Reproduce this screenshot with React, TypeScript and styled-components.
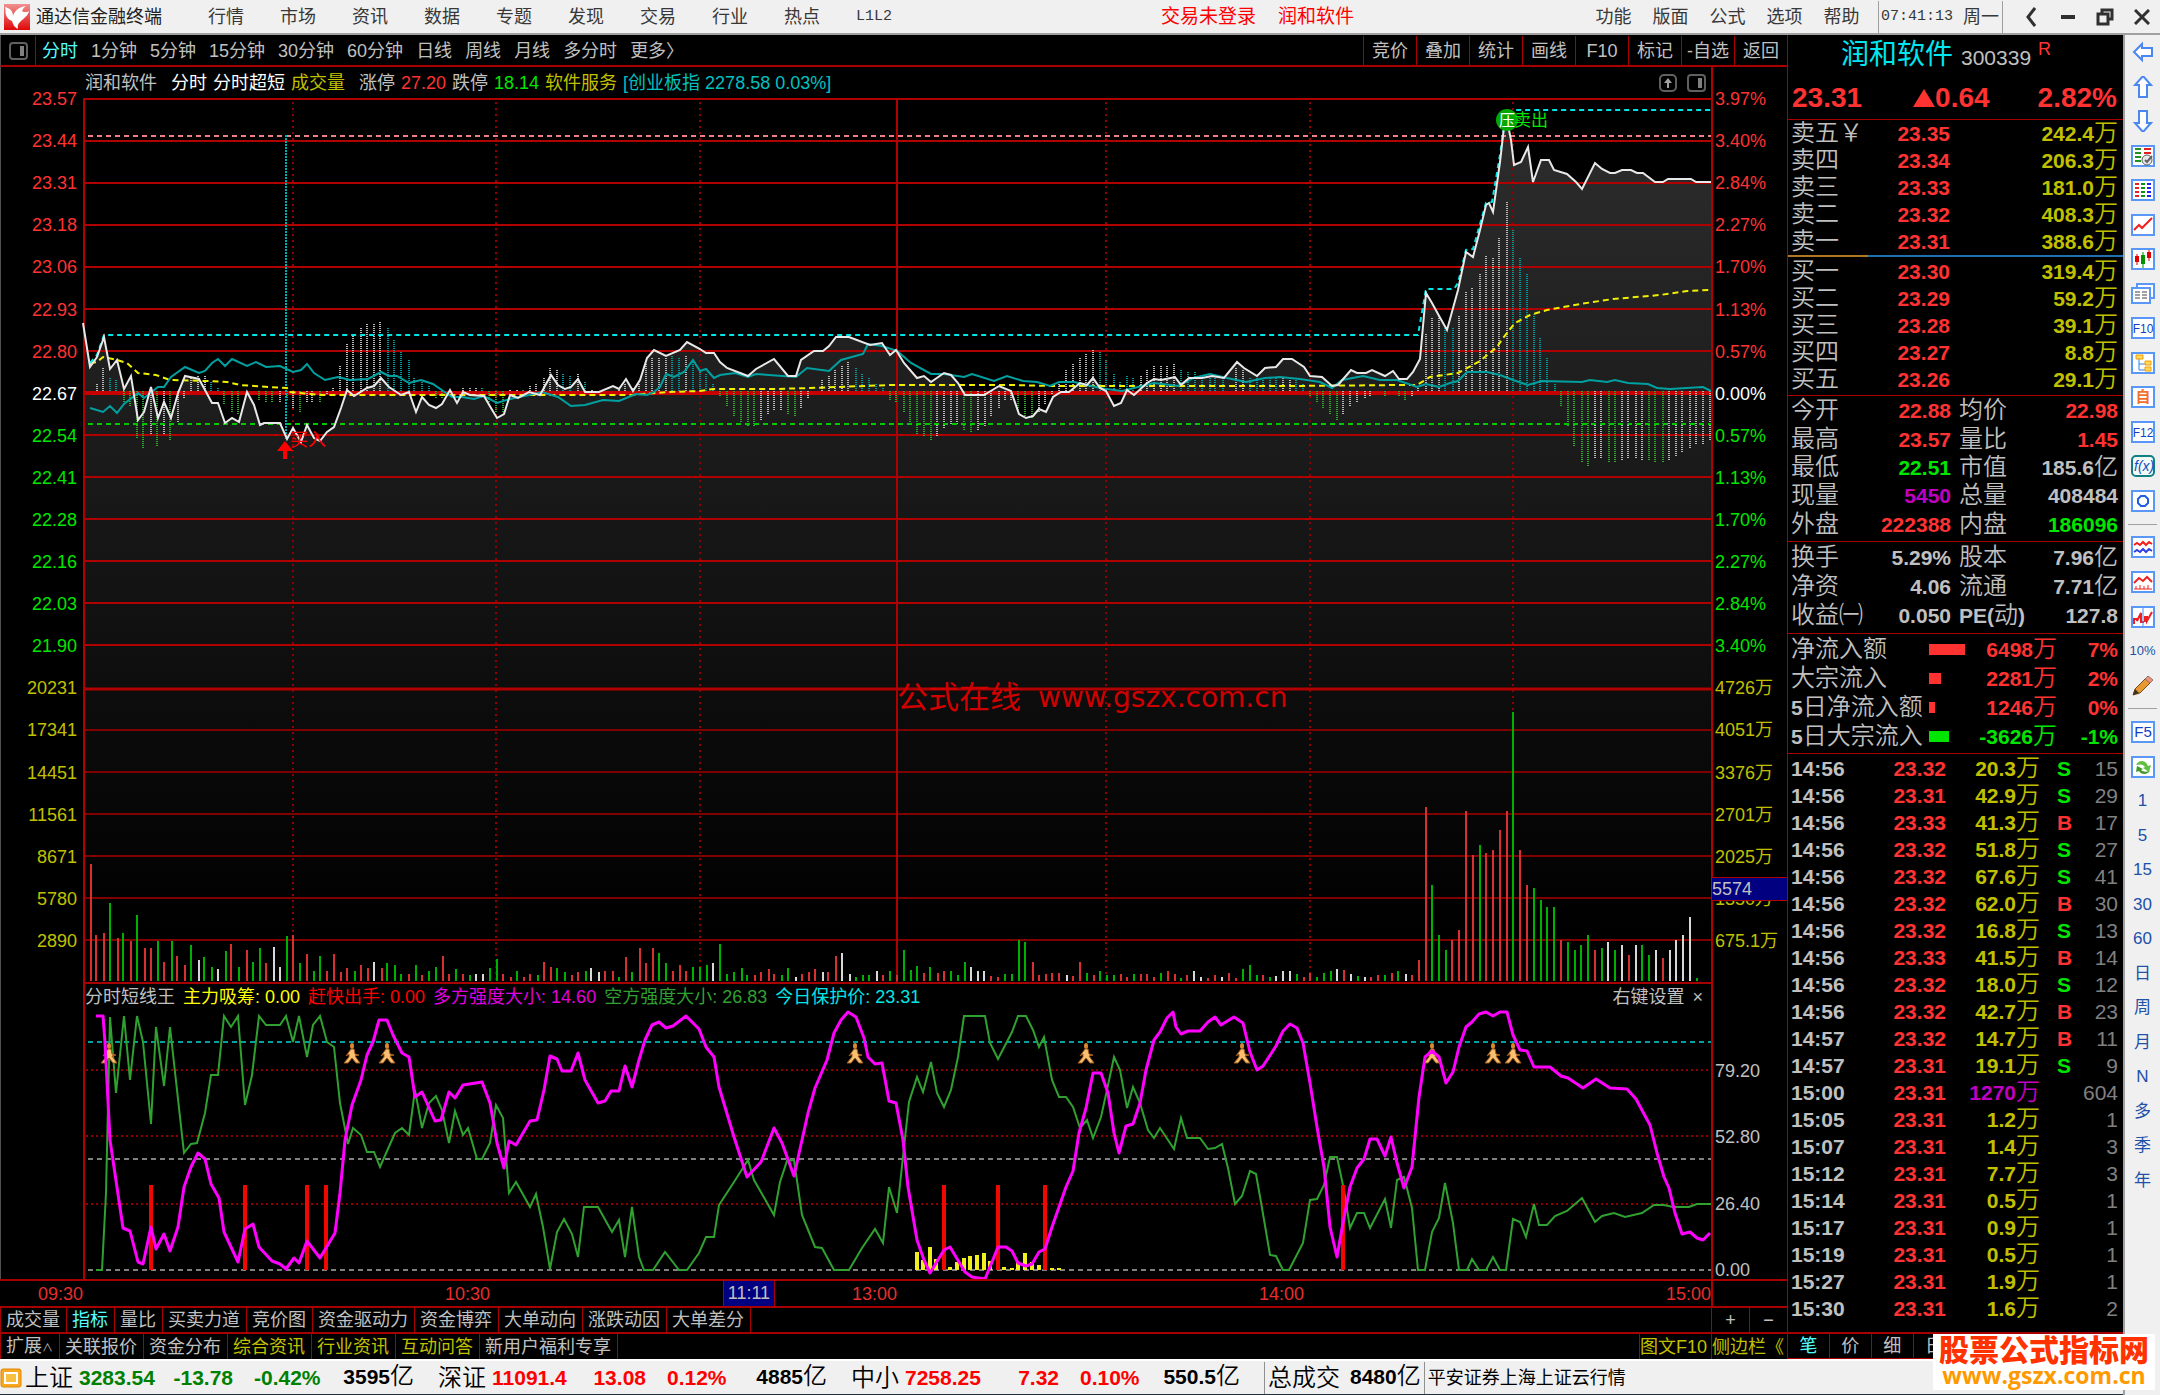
import React from "react";
import styled, { createGlobalStyle, css } from "styled-components";

const C = {
  bg: "#000000",
  chrome: "#f0f0f0",
  line: "#a80000",
  grid: "#b00000",
  gridDim: "#800000",
  gray: "#c0c0c0",
  dim: "#808080",
  red: "#ff3232",
  green: "#00e600",
  yellow: "#c0c000",
  cyan: "#54ffff",
  teal: "#00c0c0",
  magenta: "#c000c0",
  white: "#ffffff",
};

const SANS = `"Liberation Sans", "Noto Sans CJK SC", sans-serif`;
const MONO = `"Liberation Mono", "Noto Sans CJK SC", monospace`;

const GlobalStyle = createGlobalStyle`
  *, *::before, *::after { box-sizing: border-box; }
  body { margin: 0; background: ${C.bg}; font-family: ${SANS}; font-size: 18px; line-height: 24px; }
  button { margin: 0; padding: 0; border: 0; background: none; color: inherit; font: inherit; cursor: pointer; white-space: nowrap; }
  table { border-collapse: collapse; }
`;

/* ---------- page frame ---------- */

const Page = styled.div`
  position: relative;
  display: flex;
  flex-direction: column;
  height: 100vh;
  overflow: hidden;
  background: ${C.bg};
  color: ${C.gray};
  white-space: nowrap;
`;

const Body = styled.div`
  display: flex;
  flex: 1;
  min-height: 0;
`;

const Desk = styled.div`
  display: flex;
  flex: 1;
  flex-direction: column;
  min-width: 0;
`;

const Panes = styled.div`
  display: flex;
  flex: 1;
  min-height: 0;
`;

const Workspace = styled.main`
  display: flex;
  flex: 1;
  flex-direction: column;
  min-width: 0;
`;

/* ---------- menu bar ---------- */

const MenuBar = styled.header`
  display: flex;
  flex: none;
  align-items: center;
  height: 35px;
  padding: 0 0 0 4px;
  border-bottom: 2px solid #a0a0a0;
  background: ${C.chrome};
  color: #383838;
`;

const AppName = styled.span`
  width: 160px;
  padding-left: 6px;
  color: #202020;
`;

const MenuButton = styled.button<{ $w: number; $mono?: boolean }>`
  width: ${(p) => p.$w}px;
  text-align: center;
  ${(p) => p.$mono && css`font-family: ${MONO}; font-size: 15px;`}
`;

const Alerts = styled.div`
  display: flex;
  gap: 22px;
  margin-left: 251px;
  color: #ff0000;
  font-size: 19px;
`;

const Spring = styled.div`
  flex: 1;
`;

const Clock = styled.div`
  display: flex;
  align-items: center;
  gap: 10px;
  width: 125px;
  height: 32px;
  margin: 0 9px 0 8px;
  padding-left: 2px;
  border: solid #a0a0a0;
  border-width: 0 1px;
`;

const ClockTime = styled.span`
  font-family: ${MONO};
  font-size: 15px;
`;

const WindowButton = styled.button`
  display: flex;
  align-items: center;
  justify-content: center;
  width: 37px;
  height: 32px;
`;

/* ---------- period toolbar ---------- */

const Toolbar = styled.nav`
  display: flex;
  flex: none;
  height: 32px;
  padding-top: 1px;
  border-bottom: 2px solid ${C.line};
  border-left: 1px solid #505050;
`;

const PaneToggle = styled.button`
  display: flex;
  align-items: center;
  justify-content: center;
  width: 35px;
  border-right: 1px solid ${C.line};
`;

const Periods = styled.div`
  display: flex;
  flex: 1;
  gap: 13px;
  align-items: center;
  padding-left: 6px;
`;

const TextButton = styled.button<{ $color?: string }>`
  color: ${(p) => p.$color ?? "inherit"};
`;

const ToolButton = styled.button`
  width: 53px;
  border-left: 1px solid ${C.line};
`;

/* ---------- chart grid ---------- */

const ChartGrid = styled.section`
  display: grid;
  flex: 1;
  grid-template-columns: 83px minmax(0, 1fr) 76px;
  grid-template-rows: 31px minmax(0, 884fr) minmax(0, 297fr) 27px;
  min-height: 0;
`;

const Axis = styled.div<{ $side: "left" | "right" }>`
  position: relative;
  display: flex;
  flex-direction: column;
  grid-row: 1 / 3;
  grid-column: ${(p) => (p.$side === "left" ? 1 : 3)};
  padding: 11px 0 20px;
  ${(p) =>
    p.$side === "left"
      ? css`
          padding-right: 6px;
          border-left: 1px solid #505050;
          text-align: right;
        `
      : css`
          padding-left: 2px;
          border-left: 2px solid ${C.grid};
        `}
`;

const Tick = styled.div<{ $color: string }>`
  display: flex;
  flex: 1;
  align-items: center;
  justify-content: inherit;
  color: ${(p) => p.$color};
`;

const LeftTick = styled(Tick)`
  justify-content: flex-end;
`;

const CursorValue = styled.div`
  position: absolute;
  top: 88.5%;
  right: 0;
  left: -1px;
  height: 24px;
  border: 1px solid ${C.grid};
  border-width: 1px 0;
  background: #000080;
  color: ${C.gray};
  line-height: 22px;
`;

const InfoBar = styled.div`
  display: flex;
  gap: 6px;
  align-items: center;
  padding: 0 5px 0 2px;
`;

const Ink = styled.span<{ $color: string; $wide?: boolean }>`
  margin-right: ${(p) => (p.$wide ? 8 : 0)}px;
  color: ${(p) => p.$color};
`;

const IconButton = styled.button`
  display: flex;
  margin-left: 4px;
`;

const Plot = styled.div`
  grid-column: 2;
  min-height: 0;
`;

const SubPlot = styled.div`
  display: flex;
  grid-column: 2;
  flex-direction: column;
  min-height: 0;
  border-top: 2px solid ${C.line};
`;

const SubHeader = styled.div`
  display: flex;
  flex: none;
  gap: 8px;
  align-items: center;
  height: 26px;
  padding: 0 8px 0 2px;
`;

const Canvas = styled.svg`
  display: block;
  flex: 1;
  width: 100%;
  height: 100%;
  min-height: 0;
  overflow: visible;
  font-family: ${SANS};
`;

const SubLeft = styled.div`
  grid-column: 1;
  border-left: 1px solid #505050;
`;

const SubAxis = styled.div`
  display: flex;
  grid-column: 3;
  flex-direction: column;
  justify-content: space-between;
  padding: 80px 0 0 2px;
  border-left: 2px solid ${C.grid};
  line-height: 18px;
`;

const TimeAxis = styled.div`
  position: relative;
  display: flex;
  grid-row: 4;
  grid-column: 1 / 3;
  align-items: center;
  border-top: 2px solid ${C.line};
  color: #e62e2e;
  text-align: right;
`;

const TimeStart = styled.span`
  width: 83px;
`;

const TimeMark = styled.span`
  flex: 1;
`;

const CursorTime = styled.span`
  position: absolute;
  top: 0;
  left: 42.25%;
  width: 52px;
  height: 25px;
  border: 1px solid ${C.line};
  border-width: 0 1px;
  background: #000080;
  color: ${C.gray};
  line-height: 24px;
  text-align: center;
`;

const TimeCorner = styled.div`
  grid-row: 4;
  grid-column: 3;
  border-top: 2px solid ${C.line};
  border-left: 2px solid ${C.grid};
`;

/* ---------- bottom tabs ---------- */

const TabRow = styled.nav<{ $h: number }>`
  display: flex;
  flex: none;
  height: ${(p) => p.$h}px;
  border-top: 2px solid ${C.line};
  border-left: 1px solid ${C.line};
`;

const Tab = styled.button<{ $color?: string }>`
  padding: 0 6px 0 5px;
  border-right: 1px solid ${C.line};
  color: ${(p) => p.$color ?? "inherit"};
`;

const Caret = styled.small`
  font-size: 11px;
`;

const EdgeTab = styled.button<{ $w: number; $color?: string }>`
  width: ${(p) => p.$w}px;
  border-left: 1px solid ${C.line};
  color: ${(p) => p.$color ?? "inherit"};
  text-align: ${(p) => (p.$color ? "left" : "center")};
`;

/* ---------- quote panel ---------- */

const Quote = styled.aside`
  display: flex;
  flex: none;
  flex-direction: column;
  width: 336px;
  border-left: 1px solid ${C.line};
  font-size: 21px;
`;

const Title = styled.div`
  display: flex;
  flex: none;
  align-items: center;
  height: 40px;
  padding-left: 53px;
`;

const StockName = styled.h1`
  margin: 0 8px 0 0;
  color: #00e6f0;
  font-size: 28px;
  font-weight: 400;
`;

const StockCode = styled.span`
  padding-top: 5px;
`;

const Flag = styled.span`
  align-self: flex-start;
  margin-left: 7px;
  padding-top: 2px;
  color: ${C.red};
  font-size: 18px;
`;

const Price = styled.div`
  display: flex;
  flex: none;
  align-items: center;
  justify-content: space-between;
  height: 45px;
  padding: 2px 6px 0 4px;
  border-bottom: 1px solid ${C.line};
  color: ${C.red};
  font-size: 28px;
  font-weight: 700;
`;

const Up = styled.span`
  display: flex;
  align-items: center;
  margin-left: 3px;
`;

const Triangle = styled.i`
  border: solid transparent;
  border-width: 0 11px 18px;
  border-bottom-color: ${C.red};
`;

const DataTable = styled.table`
  width: 100%;
  table-layout: fixed;

  td,
  th {
    height: 27px;
    padding: 0;
    font-weight: 400;
    line-height: 24px;
    text-align: right;
  }
  th {
    text-align: left;
  }
`;

const BookSection = styled.div<{ $last?: boolean }>`
  flex: none;
  height: ${(p) => (p.$last ? 139 : 137)}px;
  padding: ${(p) => (p.$last ? 1 : 0)}px 5px 0 3px;
  ${(p) =>
    p.$last
      ? css`border-bottom: 1px solid ${C.line};`
      : css`
          border-bottom: 2px solid;
          border-image: linear-gradient(90deg, #b07820 24%, #2070b0 24%) 1;
        `}
`;

const StatSection = styled.div<{ $h: number }>`
  display: flex;
  flex: none;
  flex-direction: column;
  height: ${(p) => p.$h}px;
  padding: 1px 5px 2px 3px;
  border-bottom: 1px solid ${C.line};
`;

const StatRow = styled.div`
  display: grid;
  flex: 0 1 29px;
  grid-template-columns: auto 1fr 62px 89px;
  column-gap: 8px;
  align-items: center;
  min-height: 0;
`;

const FlowRow = styled.div`
  display: grid;
  flex: 0 1 29px;
  grid-template-columns: 138px 38px 1fr 61px;
  align-items: center;
  min-height: 0;
`;

const FlowBar = styled.i<{ $color: string }>`
  height: 11px;
  background: ${(p) => p.$color};
`;

const Right = styled.span`
  text-align: right;
`;

const Tape = styled.div`
  flex: 1;
  min-height: 0;
  padding: 1px 5px 0 3px;
  overflow: hidden;
`;

const Side = styled.td<{ $buy: boolean }>`
  && {
    padding-left: 17px;
    color: ${(p) => (p.$buy ? C.red : C.green)};
    font-weight: 700;
    text-align: left;
  }
`;

const Lots = styled.td`
  color: ${C.dim};
`;

const PanelTabs = styled.nav`
  display: grid;
  flex: none;
  grid-template-columns: repeat(8, 1fr);
  height: 27px;
  border: solid ${C.line};
  border-width: 2px 0 1px;
  font-size: 18px;
`;

const PanelTab = styled.button<{ $on?: boolean }>`
  border-right: 1px solid ${C.line};
  color: ${(p) => (p.$on ? C.cyan : "inherit")};
`;

const Latin = styled.span<{ $color?: string }>`
  color: ${(p) => p.$color ?? "inherit"};
  font-size: 21px;
  font-weight: 700;
  line-height: 20px;
`;

const Han = styled.span<{ $color?: string }>`
  color: ${(p) => p.$color ?? "inherit"};
  font-size: 24px;
  font-weight: 350;
  line-height: 20px;
`;

/* ---------- side tools ---------- */

const SideTools = styled.nav`
  flex: none;
  width: 37px;
  border-left: 2px solid #a0a0a0;
  background: ${C.chrome};
`;

const ToolStack = styled.div`
  display: flex;
  flex-direction: column;
  height: 1163px;
`;

const SideButton = styled.button<{ $small?: boolean }>`
  display: flex;
  flex: 1;
  align-items: center;
  justify-content: center;
  color: #2050a8;
  font-size: ${(p) => (p.$small ? 13 : 17)}px;
`;

const SideRule = styled.hr`
  width: 29px;
  height: 12px;
  margin: 0 auto;
  border: 0;
  background: linear-gradient(#a0a0a0, #a0a0a0) center / 100% 1px no-repeat;
`;

/* ---------- status bar ---------- */

const Status = styled.footer`
  display: flex;
  flex: none;
  align-items: center;
  height: 36px;
  border-top: 2px solid #ffffff;
  border-bottom: 1px solid #20303c;
  background: ${C.chrome};
  color: #000000;
`;

const IndexGroup = styled.div<{ $color: string }>`
  display: grid;
  grid-template-columns: 54px 94px 60px 89px 92px 24px;
  align-items: center;
  color: ${(p) => p.$color};

  & > :nth-child(3),
  & > :nth-child(5) {
    text-align: right;
  }
  & > :nth-child(4) {
    padding-left: 21px;
  }
`;

const StatusCell = styled.div`
  display: flex;
  gap: 10px;
  align-items: center;
  height: 32px;
  padding: 0 3px;
  border-left: 1px solid #909090;
`;

const Stamp = styled.div`
  position: absolute;
  right: 5px;
  bottom: 5px;
  display: flex;
  flex-direction: column;
  align-items: center;
  width: 222px;
  height: 56px;
  background: #ffffff;
  color: #ff9900;
  font-family: "Open Sans", sans-serif;
  font-size: 23px;
  font-weight: 700;
  line-height: 26px;
`;

const StampTitle = styled.strong`
  color: #ff3200;
  font-family: "Noto Sans CJK SC", sans-serif;
  font-size: 30px;
  font-weight: 900;
  line-height: 28px;
`;

/* ---------- helpers ---------- */

function Mixed({ children, color }: { children: string; color?: string }) {
  return (
    <>
      {children
        .split(/([\x21-\x7e]+)/)
        .filter(Boolean)
        .map((part, i) =>
          /^[\x21-\x7e]/.test(part) ? (
            <Latin key={i} $color={color}>{part}</Latin>
          ) : (
            <Han key={i} $color={color}>{part}</Han>
          )
        )}
    </>
  );
}

const pairs = (s: string) => s.trim().split(/\s+/).map((p) => p.split(",").map(Number));
const bars = (s: string, base: number) => pairs(s).map(([x, y]) => `M${x} ${base}V${y}`).join("");

/* ---------- chart data ---------- */

const PRICE = `83,323 90,367 97,357 104,337 110,369 117,360 124,389 131,376 138,420 144,412 151,387 158,418 164,402 171,418 178,393 185,376 199,379 205,390 212,403 218,403 225,423 232,418 239,422 247,392 254,405 260,425 264,423 280,423 287,439 293,428 301,442 307,425 314,438 320,441 327,432 334,427 341,408 347,390 354,396 367,388 374,386 381,378 389,387 401,395 409,392 416,412 422,397 429,405 436,408 442,404 450,390 457,403 463,392 470,395 484,396 491,408 497,418 504,414 510,395 518,398 529,392 540,395 551,375 558,385 565,389 571,387 578,379 585,392 599,392 613,386 619,389 626,379 633,391 640,380 647,358 654,350 666,356 680,350 687,342 700,349 706,353 714,353 720,362 727,368 748,376 756,369 774,359 788,376 796,376 801,360 814,351 823,351 829,346 836,337 849,337 870,345 882,343 890,355 896,350 904,363 917,378 924,376 931,382 944,373 951,375 958,383 965,395 984,395 999,386 1011,391 1019,414 1026,418 1033,416 1039,409 1046,412 1053,397 1061,392 1069,392 1080,383 1087,385 1093,378 1100,388 1106,391 1114,406 1121,403 1127,390 1134,395 1147,383 1154,379 1161,380 1175,377 1181,385 1189,378 1202,378 1212,376 1224,378 1237,362 1244,368 1257,376 1265,368 1276,367 1283,359 1292,359 1304,367 1310,376 1322,377 1332,386 1338,385 1351,370 1357,373 1366,373 1372,370 1385,376 1393,371 1399,379 1407,379 1413,372 1420,359 1426,293 1432,303 1438,314 1447,330 1458,290 1466,252 1473,257 1480,230 1486,205 1489,203 1493,212 1500,162 1504,127 1508,125 1511,140 1514,165 1521,162 1528,147 1533,182 1541,160 1549,160 1554,170 1567,174 1576,182 1582,189 1595,163 1602,169 1610,173 1615,173 1622,170 1631,170 1637,173 1643,173 1655,182 1663,182 1668,179 1691,179 1696,182 1711,182`;

const INDEX_LINE = `90,408 103,412 110,406 117,413 124,404 138,393 144,398 158,387 164,387 171,377 185,367 199,373 205,371 212,363 218,359 225,366 232,359 247,366 256,362 266,367 280,366 293,372 301,370 307,364 314,373 325,380 338,377 350,380 368,379 381,372 389,376 397,376 409,383 421,380 433,384 446,393 452,397 462,397 474,399 484,396 497,403 510,399 529,395 542,392 558,397 571,406 585,405 603,400 619,401 636,394 647,395 654,392 660,387 666,374 674,377 684,372 693,360 700,371 706,369 714,378 720,375 735,373 748,377 756,374 796,377 807,368 829,371 841,360 863,354 868,344 882,346 897,351 911,363 931,374 944,374 964,377 972,374 994,381 1007,376 1023,381 1037,382 1050,386 1059,382 1074,382 1091,386 1106,389 1122,391 1134,388 1154,383 1178,386 1193,378 1210,374 1227,378 1246,382 1265,378 1280,377 1300,379 1320,382 1332,388 1342,380 1363,376 1380,380 1397,380 1417,387 1426,384 1439,387 1450,383 1458,381 1467,372 1487,372 1500,375 1513,380 1528,385 1542,381 1582,382 1590,380 1607,382 1615,380 1628,383 1648,384 1657,388 1670,389 1703,387 1711,391`;

const AVERAGE = `90,363 97,362 103,357 117,360 127,363 138,373 156,375 170,380 207,381 227,382 240,385 268,387 287,388 289,392 321,395 631,395 668,392 700,391 713,389 776,389 810,388 892,385 1011,385 1052,386 1173,386 1294,386 1400,385 1417,385 1430,377 1458,373 1480,361 1497,347 1503,338 1515,323 1530,315 1547,310 1580,304 1613,299 1660,295 1687,291 1711,290`;

const HIGH = `90,363 97,355 104,335 1418,335 1426,289 1454,289 1458,283 1466,250 1473,249 1486,203 1492,202 1500,155 1504,127 1515,110 1711,110`;

const PULSE_WHITE = `97,384 103,367 151,435 164,435 178,423 184,399 191,377 198,376 205,375 280,403 293,408 307,403 312,403 327,395 333,387 340,366 347,343 353,335 361,328 367,323 374,323 380,322 463,388 470,388 476,388 510,389 517,389 530,385 536,384 544,378 550,367 557,369 578,373 592,389 619,389 625,383 633,388 639,383 646,363 652,358 659,357 666,357 686,355 761,421 768,415 774,410 781,411 801,408 808,399 822,380 829,376 835,370 842,365 848,362 937,436 944,429 951,424 957,424 978,431 985,426 991,417 999,408 1005,401 1011,400 1039,413 1045,405 1052,395 1059,382 1066,370 1073,364 1080,357 1086,353 1093,349 1141,375 1147,370 1154,365 1161,366 1167,365 1174,363 1236,368 1243,370 1283,377 1290,377 1343,414 1350,407 1357,402 1365,399 1370,396 1412,397 1418,385 1426,334 1432,317 1439,316 1459,315 1466,291 1472,287 1480,273 1486,255 1493,258 1499,237 1507,202 1595,459 1601,459 1622,461 1628,459 1636,459 1642,460 1669,461 1676,456 1682,452 1690,448 1696,445 1703,444 1710,440`;
const PULSE_TEAL = `110,378 116,380 211,382 218,388 388,328 394,340 401,352 409,360 414,378 422,379 429,385 482,388 523,389 563,373 570,375 585,381 672,355 679,357 693,360 700,372 706,373 713,383 856,367 862,373 869,378 876,383 883,387 1100,352 1106,360 1114,373 1120,382 1127,375 1133,377 1181,370 1188,371 1195,372 1202,376 1210,376 1215,377 1223,378 1250,378 1257,378 1263,378 1270,378 1276,378 1296,380 1303,383 1445,327 1453,327 1513,229 1520,257 1527,273 1534,314 1540,338 1547,358 1555,383`;
const PULSE_GREEN = `124,403 130,407 137,438 143,449 157,446 170,440 224,405 232,412 238,415 259,401 266,403 272,403 287,400 300,413 320,403 436,399 442,399 489,403 496,412 503,412 720,397 727,407 734,417 741,423 748,427 754,426 788,415 795,417 890,401 896,402 904,413 910,423 917,435 924,436 931,441 964,431 971,432 1018,413 1025,417 1032,419 1310,396 1317,402 1323,408 1330,415 1337,420 1385,396 1399,397 1405,401 1561,407 1568,427 1574,446 1582,463 1588,467 1609,462 1615,462 1649,461 1655,463 1663,463`;

const VOL_RED = `91,864 96,935 104,933 118,938 131,941 145,948 151,948 164,962 177,956 185,965 231,944 247,950 266,963 293,935 307,954 327,971 334,954 341,972 347,968 361,965 368,968 382,968 409,974 422,975 443,956 449,974 463,974 503,974 511,977 524,977 530,974 544,962 551,967 572,975 578,972 605,971 613,971 626,957 640,948 646,963 653,948 673,971 680,965 686,971 755,975 761,972 769,969 774,974 802,974 809,972 815,969 828,972 836,956 883,975 897,975 924,973 938,973 944,971 991,976 998,977 1033,962 1039,975 1046,974 1052,973 1059,973 1073,976 1080,962 1094,975 1121,974 1127,977 1141,974 1147,974 1154,977 1168,971 1175,974 1187,975 1208,978 1215,975 1229,973 1236,978 1263,975 1304,977 1310,973 1344,970 1371,977 1378,975 1392,973 1412,975 1419,960 1426,807 1452,940 1459,930 1466,811 1473,855 1486,853 1493,850 1500,830 1507,811 1520,850 1527,885 1561,940 1595,950 1629,955 1663,958`;
const VOL_GREEN = `110,903 123,933 137,915 158,941 172,941 191,945 204,957 212,967 226,951 239,967 253,962 260,948 287,936 300,963 314,971 320,956 355,971 387,963 395,965 401,974 416,965 429,971 436,967 456,969 470,975 490,968 497,959 517,971 538,975 557,968 565,972 586,971 619,977 632,972 659,953 666,963 693,967 700,967 707,965 720,944 727,974 734,972 742,968 747,975 782,975 788,968 856,977 863,975 869,975 890,971 904,950 911,970 917,966 930,967 951,971 958,975 965,962 1005,974 1012,974 1019,940 1025,942 1087,973 1100,971 1107,975 1114,975 1134,974 1161,973 1181,978 1243,969 1250,965 1257,975 1270,977 1297,974 1317,977 1324,973 1331,971 1358,976 1385,975 1398,971 1432,885 1439,935 1446,950 1480,845 1513,712 1534,888 1541,900 1547,907 1554,907 1568,942 1575,950 1581,945 1588,935 1602,948 1615,950 1642,945 1649,955 1697,978`;
const VOL_WHITE = `199,960 218,969 274,947 280,967 374,962 476,974 483,974 591,968 599,972 713,963 796,977 823,972 842,953 850,974 877,971 971,967 978,971 984,971 1067,975 1194,971 1201,977 1222,977 1276,976 1283,971 1290,971 1337,969 1351,974 1365,977 1406,974 1608,942 1622,945 1636,945 1656,950 1670,950 1676,940 1683,935 1690,917`;

const LONG_LINE = `96,1016 103,1016 105,1043 110,1140 123,1228 130,1231 138,1262 143,1264 151,1227 156,1249 164,1234 170,1251 178,1227 184,1187 191,1167 198,1153 205,1159 211,1184 219,1198 224,1232 238,1262 245,1229 253,1224 259,1247 272,1261 280,1264 286,1269 294,1258 299,1263 307,1241 320,1258 335,1233 340,1193 345,1140 352,1105 361,1080 367,1055 373,1042 379,1020 387,1020 393,1035 402,1053 409,1057 415,1097 422,1092 435,1121 441,1120 449,1092 455,1098 463,1085 482,1082 490,1103 497,1143 504,1168 509,1141 516,1145 530,1121 537,1120 544,1090 550,1056 557,1059 562,1071 571,1071 578,1053 585,1080 598,1103 605,1101 611,1091 619,1091 625,1066 632,1087 639,1060 645,1040 652,1025 659,1022 666,1028 673,1026 686,1016 699,1029 706,1047 714,1057 719,1087 734,1137 747,1177 761,1162 774,1128 782,1143 794,1176 802,1140 808,1113 815,1088 827,1060 834,1033 841,1020 848,1012 856,1017 864,1038 868,1057 875,1064 882,1063 889,1101 896,1103 903,1140 908,1187 917,1240 924,1260 930,1273 944,1250 950,1247 965,1272 972,1277 985,1279 992,1262 998,1247 1006,1247 1012,1251 1018,1263 1026,1266 1032,1264 1039,1252 1045,1249 1052,1227 1059,1207 1066,1187 1073,1171 1079,1133 1086,1108 1093,1073 1101,1073 1108,1093 1114,1133 1119,1153 1126,1126 1133,1124 1140,1103 1146,1070 1154,1040 1160,1032 1167,1018 1173,1012 1176,1027 1181,1034 1188,1031 1200,1031 1208,1022 1215,1017 1221,1025 1234,1017 1243,1023 1250,1052 1257,1070 1263,1066 1276,1046 1283,1031 1290,1024 1297,1028 1303,1043 1310,1083 1317,1127 1324,1167 1330,1227 1337,1257 1343,1223 1350,1187 1357,1168 1364,1159 1370,1139 1377,1139 1385,1156 1391,1137 1397,1163 1404,1188 1412,1167 1419,1097 1425,1057 1432,1051 1439,1057 1446,1083 1453,1072 1459,1047 1466,1027 1472,1022 1479,1014 1486,1012 1493,1016 1500,1012 1507,1012 1513,1035 1520,1050 1527,1051 1534,1067 1550,1067 1561,1076 1568,1078 1583,1088 1596,1079 1610,1088 1627,1089 1636,1099 1650,1125 1657,1153 1664,1177 1669,1188 1675,1213 1682,1234 1690,1232 1697,1238 1703,1240 1710,1233`;

const SHORT_LINE = `96,1270 102,1270 106,1193 110,1017 116,1093 124,1016 130,1080 137,1016 143,1042 151,1124 156,1027 164,1086 170,1027 184,1153 191,1144 197,1143 205,1113 211,1075 218,1075 224,1016 231,1027 238,1016 245,1105 252,1075 259,1016 266,1025 280,1025 286,1016 293,1042 299,1016 307,1057 313,1025 320,1016 327,1042 334,1047 340,1103 348,1144 353,1128 361,1135 367,1152 374,1152 380,1167 395,1133 402,1128 409,1135 415,1090 422,1128 429,1103 436,1096 442,1110 449,1143 455,1111 463,1135 468,1128 477,1159 482,1159 490,1143 496,1105 503,1118 509,1193 516,1182 530,1207 536,1194 543,1227 550,1269 557,1232 564,1219 572,1234 578,1257 584,1207 598,1207 612,1232 619,1220 625,1257 632,1207 639,1257 644,1270 653,1270 665,1252 679,1270 687,1270 699,1253 706,1237 714,1237 719,1205 734,1182 748,1160 754,1180 774,1215 780,1182 787,1161 794,1160 802,1215 815,1247 822,1248 834,1270 849,1270 862,1248 875,1229 883,1243 889,1187 897,1213 904,1147 909,1102 917,1077 923,1092 931,1062 937,1093 944,1107 951,1090 958,1057 964,1016 985,1016 990,1043 998,1059 1012,1032 1018,1016 1026,1016 1033,1030 1039,1047 1044,1037 1052,1080 1059,1097 1066,1097 1073,1107 1080,1128 1087,1120 1093,1138 1101,1117 1107,1090 1114,1057 1120,1070 1127,1108 1133,1087 1140,1103 1148,1130 1154,1138 1160,1128 1174,1149 1181,1118 1187,1138 1200,1138 1208,1149 1215,1148 1222,1144 1228,1168 1235,1204 1242,1196 1250,1171 1256,1174 1262,1208 1270,1255 1276,1256 1283,1270 1289,1270 1303,1243 1310,1200 1317,1199 1324,1185 1330,1157 1337,1157 1344,1190 1350,1228 1357,1213 1364,1213 1370,1228 1385,1199 1391,1228 1397,1180 1404,1177 1412,1208 1418,1270 1425,1270 1432,1232 1439,1218 1445,1183 1453,1223 1459,1270 1467,1270 1472,1259 1479,1270 1486,1270 1493,1257 1500,1270 1506,1270 1513,1219 1520,1222 1526,1237 1534,1204 1539,1225 1547,1225 1555,1216 1567,1211 1582,1198 1595,1222 1602,1216 1614,1213 1625,1217 1642,1213 1654,1205 1664,1205 1673,1207 1689,1207 1697,1204 1711,1204`;

const INFLOW = `917,1252 923,1260 930,1247 936,1259 950,1267 957,1262 964,1258 970,1256 977,1255 984,1253 990,1261 1004,1267 1012,1268 1018,1262 1025,1253 1032,1262 1039,1265 1052,1268 1059,1268`;
const URGENT = [151, 245, 307, 326, 944, 998, 1045, 1343];
const RUNNERS = [109, 352, 387, 855, 1086, 1242, 1432, 1493, 1513];
const PRICE_GRID = Array.from({ length: 14 }, (_, i) => 99 + i * 42);
const VOLUME_GRID = [730, 772, 814, 856, 898, 940];
const HALF_HOURS = [293, 496, 700, 1106, 1310, 1513];

function PriceChart() {
  return (
    <Canvas viewBox="83 98 1628 884" preserveAspectRatio="none" role="img" aria-label="分时走势">
      <defs>
        <linearGradient id="depth" gradientUnits="userSpaceOnUse" x1="0" y1="67" x2="0" y2="930">
          <stop offset="0" stopColor="#303030" />
          <stop offset="1" stopColor="#000000" />
        </linearGradient>
      </defs>
      <polygon points={`${PRICE} 1711,982 83,982`} fill="url(#depth)" />
      <path d={PRICE_GRID.map((y) => `M83 ${y}H1711`).join("")} stroke={C.grid} strokeWidth="2" />
      <path d={VOLUME_GRID.map((y) => `M83 ${y}H1711`).join("")} stroke={C.gridDim} strokeWidth="2" />
      <path d="M83 393H1711" stroke="#c80000" strokeWidth="4" />
      <path d="M83 689H1711" stroke={C.grid} strokeWidth="3" />
      <path d={HALF_HOURS.map((x) => `M${x} 102V980`).join("")} stroke="#900000" strokeWidth="2" strokeDasharray="2 4" />
      <path d="M84 98V982M897 98V982" stroke={C.grid} strokeWidth="2" />
      <path d={bars(PULSE_WHITE, 391)} stroke="#b8b8b8" strokeWidth="2" strokeDasharray="1 1" />
      <path d={bars(PULSE_TEAL, 391)} stroke="#009898" strokeWidth="2" strokeDasharray="1 1" />
      <path d={bars(PULSE_GREEN, 391)} stroke="#30a830" strokeWidth="2" strokeDasharray="1 1" />
      <path d="M88 136H1711" stroke="#f08080" strokeWidth="2" strokeDasharray="5 4" />
      <path d="M88 424H1711" stroke="#00c800" strokeWidth="2" strokeDasharray="5 4" />
      <path d="M286 135V439" stroke="#00b0b0" strokeWidth="2" strokeDasharray="2 1" />
      <polyline points={AVERAGE} fill="none" stroke="#f0f000" strokeWidth="2" strokeDasharray="6 4" />
      <polyline points={HIGH} fill="none" stroke="#00e6e6" strokeWidth="2" strokeDasharray="5 4" />
      <polyline points={INDEX_LINE} fill="none" stroke="#00a0a0" strokeWidth="2" />
      <polyline points={PRICE} fill="none" stroke="#e8e8e8" strokeWidth="2" />
      <path d={bars(VOL_RED, 981)} stroke="#d83030" strokeWidth="2" />
      <path d={bars(VOL_GREEN, 981)} stroke="#00b000" strokeWidth="2" />
      <path d={bars(VOL_WHITE, 981)} stroke="#d8d8d8" strokeWidth="2" />
      <path d="M1712 902V981" stroke="#ffffff" strokeWidth="2" />
      <path d="M285 441l8 10h-6v8h-4v-8h-6z" fill="#ff0000" />
      <text x="290" y="446" fontSize="18" fill="#ff0000">买入</text>
      <circle cx="1507" cy="120" r="11" fill="#00a800" />
      <text x="1514" y="126" fontSize="17" fill="#00e600">卖出</text>
      <text x="1499" y="126" fontSize="16" fill="#ffffff">压</text>
      <text x="897" y="708" fontSize="31" fill="#d00000">公式在线</text>
      <text x="1038" y="707" fontSize="28" fontFamily="DejaVu Sans, sans-serif" fill="#d00000">www.gszx.com.cn</text>
    </Canvas>
  );
}

function StrengthChart() {
  return (
    <Canvas viewBox="83 1010 1628 269" preserveAspectRatio="none" role="img" aria-label="分时短线王">
      <path d="M84 982V1279" stroke={C.grid} strokeWidth="2" />
      <path d="M86 1070H1711M86 1136H1711M86 1204H1711" stroke="#900000" strokeWidth="2" strokeDasharray="2 3" />
      <path d="M88 1042H1711" stroke="#00a0a0" strokeWidth="2" strokeDasharray="5 4" />
      <path d="M88 1159H1711M88 1270H1711" stroke="#808080" strokeWidth="2" strokeDasharray="5 4" />
      <polyline points={SHORT_LINE} fill="none" stroke="#30a030" strokeWidth="2" />
      <path d={bars(INFLOW, 1270)} stroke="#f0f020" strokeWidth="4" />
      <path d={URGENT.map((x) => `M${x} 1270V1185`).join("")} stroke="#f00800" strokeWidth="4" />
      {RUNNERS.map((x) => (
        <g key={x} transform={`translate(${x} 1043)`}>
          <ellipse cx="0" cy="3" rx="2" ry="3" fill="#d88830" />
          <path d="M-1 6L2 6L3 11L7 12L3 13L8 20L4 20L0 15L-4 20L-8 20L-3 14L-3 11L-6 13Z" fill="#f8c070" stroke="#a05818" strokeWidth="1" strokeLinejoin="round" />
        </g>
      ))}
      <polyline points={LONG_LINE} fill="none" stroke="#ff00ff" strokeWidth="3" strokeLinejoin="round" />
    </Canvas>
  );
}

/* ---------- side icons ---------- */

const ICONS: Record<string, React.ReactNode> = {
  左移: <path d="M3 11l8-8v4h10v8H11v4z" fill="#fff" stroke="#4a88f0" strokeWidth="2" />,
  上移: <path d="M12 0l8 9h-4v12H8V9H4z" fill="#fff" stroke="#4a88f0" strokeWidth="2" />,
  下移: <path d="M12 22l8-9h-4V1H8v12H4z" fill="#fff" stroke="#4a88f0" strokeWidth="2" />,
  行情勾选: (
    <>
      <path d="M4 4h6M4 8h6M4 12h6M4 16h6" stroke="#209020" strokeWidth="2" />
      <path d="M13 4h7M13 8h7" stroke="#e02020" strokeWidth="2" />
      <circle cx="16" cy="15" r="5" fill="#e8e8e8" stroke="#606060" />
      <path d="M14 15l2 2 5-6" fill="none" stroke="#606060" strokeWidth="2" />
    </>
  ),
  报价列表: (
    <>
      <path d="M6 4v15" stroke="#f02020" strokeWidth="4" strokeDasharray="2 2" />
      <path d="M12 4v15" stroke="#109010" strokeWidth="4" strokeDasharray="2 2" />
      <path d="M18 4v15" stroke="#2020f0" strokeWidth="4" strokeDasharray="2 2" />
    </>
  ),
  走势图: <path d="M3 16l5-5 3 3 10-10" fill="none" stroke="#f02020" strokeWidth="2" />,
  K线图: (
    <>
      <path d="M6 6v11M18 2v11" stroke="#e00000" strokeWidth="1" />
      <path d="M4 8h4v6H4zM16 4h4v6h-4z" fill="#e00000" />
      <path d="M12 4v16" stroke="#009000" strokeWidth="1" />
      <path d="M10 7h4v9h-4z" fill="#009000" />
    </>
  ),
  资讯: (
    <>
      <path d="M6 1h17v14H6z" fill="#fff" stroke="#5a98f8" strokeWidth="2" />
      <path d="M1 5h18v15H1z" fill="#fff" stroke="#5a98f8" strokeWidth="2" />
      <path d="M4 9h5M11 9h5M4 12h5M11 12h5M4 15h5M11 15h5" stroke="#404040" strokeWidth="1" />
    </>
  ),
  分类: (
    <>
      <path d="M8 6v12h6M8 12h6" fill="none" stroke="#3080e0" strokeWidth="1" />
      <path d="M5 3h7v4H5zM14 9h6v4h-6zM14 15h6v4h-6z" fill="#ffd860" stroke="#f0a000" strokeWidth="1" />
    </>
  ),
  函数: (
    <>
      <rect x="1" y="1" width="22" height="20" rx="4" fill="#f4fafa" stroke="#108080" strokeWidth="2" />
      <text x="3" y="16" fontSize="14" fontStyle="italic" fill="#1050c0">f(x)</text>
    </>
  ),
  圆: <path d="M10 6h4l3 3v4l-3 3h-4l-3-3V9z" fill="none" stroke="#2060e0" strokeWidth="2" />,
  双线: (
    <>
      <path d="M3 9l3-2 3 2 3-3 3 3 3-3 3 2" fill="none" stroke="#f02020" strokeWidth="2" />
      <path d="M3 16l3-2 3 2 3-3 3 3 3-3 3 2" fill="none" stroke="#3040e0" strokeWidth="2" />
    </>
  ),
  成交: (
    <>
      <path d="M3 12l5-5 4 3 4-4 5 5" fill="none" stroke="#f02020" strokeWidth="2" />
      <path d="M3 18h18M5 18v-3M9 18v-4M13 18v-3M17 18v-4" stroke="#f02020" strokeWidth="1" />
    </>
  ),
  波动: (
    <>
      <path d="M3 18v-5h3v2l4-8v9h3M14 16v-5h2v4l5-9" fill="none" stroke="#f02020" strokeWidth="2" />
      <path d="M12 2v18" stroke="#4a88f0" />
    </>
  ),
  画笔: (
    <>
      <path d="M2 20l2-6L16 2l5 4L9 18z" fill="#e89830" stroke="#705020" />
      <path d="M14 4l3-3 5 4-3 3z" fill="#f09080" stroke="#907060" />
      <path d="M2 20l2-6 4 4z" fill="#403020" />
    </>
  ),
  刷新: (
    <>
      <path d="M5 9c3-6 10-5 12 1l3-1-2 7-6-4 2-1c-2-3-5-3-9-2z" fill="#60c040" />
      <path d="M19 15c-3 4-9 4-11 0l-3 1 1-6 6 3-2 1c2 2 5 2 9 1z" fill="#409828" />
    </>
  ),
};

const BARE = new Set(["左移", "上移", "下移", "资讯", "函数", "画笔"]);
const TEXT_ICONS: Record<string, number> = { F10: 12, F12: 12, F5: 15, 自: 15 };

function ToolIcon({ name }: { name: string }) {
  return (
    <svg width="24" height="22" viewBox="0 0 24 22" fontFamily={SANS} aria-hidden="true">
      {!BARE.has(name) && <rect x="1" y="1" width="22" height="20" fill="#fff" stroke="#5a98f8" strokeWidth="2" />}
      {TEXT_ICONS[name] ? (
        <text
          x="12"
          y="16"
          textAnchor="middle"
          fontSize={TEXT_ICONS[name]}
          fontWeight={name === "自" ? 700 : 400}
          fill={name === "自" ? "#f07030" : "#1040c8"}
        >
          {name}
        </text>
      ) : (
        ICONS[name]
      )}
    </svg>
  );
}

const TOOL_GROUPS = [
  ["左移", "上移", "下移", "行情勾选", "报价列表", "走势图", "K线图", "资讯", "F10", "分类", "自", "F12", "函数", "圆"],
  ["双线", "成交", "波动", "10%", "画笔"],
  ["F5", "刷新", "1", "5", "15", "30", "60", "日", "周", "月", "N", "多", "季", "年"],
];

/* ---------- content ---------- */

const MENUS = ["行情", "市场", "资讯", "数据", "专题", "发现", "交易", "行业", "热点"];
const RIGHT_MENUS = ["功能", "版面", "公式", "选项", "帮助"];
const PERIODS = ["分时", "1分钟", "5分钟", "15分钟", "30分钟", "60分钟", "日线", "周线", "月线", "多分时", "更多〉"];
const TOOLS = ["竞价", "叠加", "统计", "画线", "F10", "标记", "-自选", "返回"];

const LEFT_PRICES = "23.57 23.44 23.31 23.18 23.06 22.93 22.80 22.67 22.54 22.41 22.28 22.16 22.03 21.90".split(" ");
const LEFT_VOLUMES = "20231 17341 14451 11561 8671 5780 2890".split(" ");
const PERCENTS = "3.97% 3.40% 2.84% 2.27% 1.70% 1.13% 0.57% 0.00% 0.57% 1.13% 1.70% 2.27% 2.84% 3.40%".split(" ");
const AMOUNTS = "4726万 4051万 3376万 2701万 2025万 1350万 675.1万".split(" ");

const SELLS = [["卖五￥", "23.35", "242.4万"], ["卖四", "23.34", "206.3万"], ["卖三", "23.33", "181.0万"], ["卖二", "23.32", "408.3万"], ["卖一", "23.31", "388.6万"]];
const BUYS = [["买一", "23.30", "319.4万"], ["买二", "23.29", "59.2万"], ["买三", "23.28", "39.1万"], ["买四", "23.27", "8.8万"], ["买五", "23.26", "29.1万"]];

const STATS = [
  ["今开", "22.88", C.red, "均价", "22.98", C.red],
  ["最高", "23.57", C.red, "量比", "1.45", C.red],
  ["最低", "22.51", C.green, "市值", "185.6亿", C.gray],
  ["现量", "5450", C.magenta, "总量", "408484", C.gray],
  ["外盘", "222388", C.red, "内盘", "186096", C.green],
];
const FUNDAMENTALS = [
  ["换手", "5.29%", C.gray, "股本", "7.96亿", C.gray],
  ["净资", "4.06", C.gray, "流通", "7.71亿", C.gray],
  ["收益㈠", "0.050", C.gray, "PE(动)", "127.8", C.gray],
];
const FLOWS: [string, number, string, string, string][] = [
  ["净流入额", 36, "6498万", "7%", C.red],
  ["大宗流入", 12, "2281万", "2%", C.red],
  ["5日净流入额", 6, "1246万", "0%", C.red],
  ["5日大宗流入", 20, "-3626万", "-1%", C.green],
];
const TRADES = `14:56 23.32 20.3万 S 15
14:56 23.31 42.9万 S 29
14:56 23.33 41.3万 B 17
14:56 23.32 51.8万 S 27
14:56 23.32 67.6万 S 41
14:56 23.32 62.0万 B 30
14:56 23.32 16.8万 S 13
14:56 23.33 41.5万 B 14
14:56 23.32 18.0万 S 12
14:56 23.32 42.7万 B 23
14:57 23.32 14.7万 B 11
14:57 23.31 19.1万 S 9
15:00 23.31 1270万 - 604
15:05 23.31 1.2万 - 1
15:07 23.31 1.4万 - 3
15:12 23.31 7.7万 - 3
15:14 23.31 0.5万 - 1
15:17 23.31 0.9万 - 1
15:19 23.31 0.5万 - 1
15:27 23.31 1.9万 - 1
15:30 23.31 1.6万 - 2`.split("\n").map((r) => r.split(" "));

const INDICES: [string, string, string, string, string, string][] = [
  ["上证", "3283.54", "-13.78", "-0.42%", "3595亿", "#008000"],
  ["深证", "11091.4", "13.08", "0.12%", "4885亿", "#ff0000"],
  ["中小", "7258.25", "7.32", "0.10%", "550.5亿", "#ff0000"],
];

const STUDY_TABS = ["成交量", "指标", "量比", "买卖力道", "竞价图", "资金驱动力", "资金博弈", "大单动向", "涨跌动因", "大单差分"];
const LINK_TABS: [string, string?][] = [["关联报价"], ["资金分布"], ["综合资讯", C.yellow], ["行业资讯", C.yellow], ["互动问答", C.yellow], ["新用户福利专享"]];
const PANEL_TABS = ["笔", "价", "细", "日"];

const PaneIcon = () => (
  <svg width="19" height="18" viewBox="0 0 19 18" aria-hidden="true">
    <rect x="1" y="1" width="17" height="16" rx="3" fill="none" stroke="#606060" strokeWidth="2" />
    <rect x="11" y="4" width="4" height="10" fill="#808080" />
  </svg>
);

function Book({ rows, last }: { rows: string[][]; last?: boolean }) {
  return (
    <BookSection $last={last}>
      <DataTable>
        <colgroup><col width="85" /><col width="74" /><col /></colgroup>
        <tbody>
          {rows.map(([label, price, vol]) => (
            <tr key={label}>
              <th scope="row"><Mixed>{label}</Mixed></th>
              <td><Mixed color={C.red}>{price}</Mixed></td>
              <td><Mixed color={C.yellow}>{vol}</Mixed></td>
            </tr>
          ))}
        </tbody>
      </DataTable>
    </BookSection>
  );
}

function Stats({ rows, height }: { rows: string[][]; height: number }) {
  return (
    <StatSection $h={height}>
      {rows.map(([a, av, ac, b, bv, bc]) => (
        <StatRow key={a}>
          <span><Mixed>{a}</Mixed></span>
          <Right><Mixed color={ac}>{av}</Mixed></Right>
          <span><Mixed>{b}</Mixed></span>
          <Right><Mixed color={bc}>{bv}</Mixed></Right>
        </StatRow>
      ))}
    </StatSection>
  );
}

export default function App() {
  return (
    <Page>
      <GlobalStyle />
      <MenuBar>
        <svg width="26" height="26" viewBox="0 0 26 26" aria-hidden="true">
          <defs>
            <linearGradient id="brand" x1="0" y1="0" x2="0" y2="1">
              <stop offset="0" stopColor="#f09090" />
              <stop offset="1" stopColor="#e00808" />
            </linearGradient>
          </defs>
          <rect width="26" height="26" fill="url(#brand)" />
          <path d="M1 3c5 1 8 4 8 9 1-5 6-9 13-10-4 3-5 6-2 6 2 0 4 0 5-1-1 5-5 7-8 10-2 2-4 4-3 8-4-2-5-5-6-8-3-1-5-3-6-6-1-3 0-5-1-8z" fill="#fff" />
        </svg>
        <AppName>通达信金融终端</AppName>
        {MENUS.map((m) => <MenuButton key={m} $w={72}>{m}</MenuButton>)}
        <MenuButton $w={72} $mono>L1L2</MenuButton>
        <Alerts><button>交易未登录</button><button>润和软件</button></Alerts>
        <Spring />
        {RIGHT_MENUS.map((m) => <MenuButton key={m} $w={57}>{m}</MenuButton>)}
        <Clock><ClockTime>07:41:13</ClockTime>周一</Clock>
        <WindowButton aria-label="后退"><svg width="10" height="20" viewBox="0 0 10 20"><path d="M9 1L2 10l7 9" fill="none" stroke="#303030" strokeWidth="3" /></svg></WindowButton>
        <WindowButton aria-label="最小化"><svg width="14" height="4"><rect width="14" height="4" fill="#303030" /></svg></WindowButton>
        <WindowButton aria-label="还原"><svg width="18" height="18" viewBox="0 0 18 18"><path d="M6 6V2h10v9h-4M2 6h10v10H2z" fill="none" stroke="#303030" strokeWidth="3" /></svg></WindowButton>
        <WindowButton aria-label="关闭"><svg width="16" height="16" viewBox="0 0 16 16"><path d="M1 1l14 14M15 1L1 15" stroke="#303030" strokeWidth="3" /></svg></WindowButton>
      </MenuBar>

      <Body>
        <Desk>
          <Panes>
            <Workspace>
              <Toolbar>
                <PaneToggle aria-label="侧栏"><PaneIcon /></PaneToggle>
                <Periods>
                  {PERIODS.map((p, i) => <TextButton key={p} $color={i === 0 ? C.cyan : undefined}>{p}</TextButton>)}
                </Periods>
                {TOOLS.map((t) => <ToolButton key={t}>{t}</ToolButton>)}
              </Toolbar>

              <ChartGrid>
                <Axis $side="left">
                  {LEFT_PRICES.map((v, i) => (
                    <LeftTick key={v} $color={i < 7 ? C.red : i === 7 ? C.white : C.green}>{v}</LeftTick>
                  ))}
                  {LEFT_VOLUMES.map((v) => <LeftTick key={v} $color={C.yellow}>{v}</LeftTick>)}
                </Axis>
                <InfoBar>
                  <Ink $color={C.gray} $wide>润和软件</Ink>
                  <Ink $color={C.white}>分时</Ink>
                  <Ink $color={C.white}>分时超短</Ink>
                  <Ink $color={C.yellow} $wide>成交量</Ink>
                  <Ink $color={C.gray}>涨停</Ink>
                  <Ink $color={C.red}>27.20</Ink>
                  <Ink $color={C.gray}>跌停</Ink>
                  <Ink $color={C.green}>18.14</Ink>
                  <Ink $color={C.yellow}>软件服务</Ink>
                  <Ink $color={C.teal}>[创业板指 2278.58 0.03%]</Ink>
                  <Spring />
                  <IconButton aria-label="放大">
                    <svg width="18" height="18" viewBox="0 0 18 18">
                      <rect x="1" y="1" width="16" height="16" rx="4" fill="none" stroke="#606060" strokeWidth="2" />
                      <path d="M9 4l4 5h-3v5H8V9H5z" fill="#a0a0a0" />
                    </svg>
                  </IconButton>
                  <IconButton aria-label="右栏"><PaneIcon /></IconButton>
                </InfoBar>
                <Axis $side="right">
                  {PERCENTS.map((v, i) => (
                    <Tick key={i} $color={i < 7 ? C.red : i === 7 ? C.white : C.green}>{v}</Tick>
                  ))}
                  {AMOUNTS.map((v) => <Tick key={v} $color={C.yellow}>{v}</Tick>)}
                  <CursorValue>5574</CursorValue>
                </Axis>
                <Plot><PriceChart /></Plot>

                <SubLeft />
                <SubPlot>
                  <SubHeader>
                    <Ink $color={C.gray}>分时短线王</Ink>
                    <Ink $color="#ffff00">主力吸筹: 0.00</Ink>
                    <Ink $color="#ff0000">赶快出手: 0.00</Ink>
                    <Ink $color="#e000e0">多方强度大小: 14.60</Ink>
                    <Ink $color="#30a030">空方强度大小: 26.83</Ink>
                    <Ink $color="#00e6e6">今日保护价: 23.31</Ink>
                    <Spring />
                    <TextButton>右键设置</TextButton>
                    <TextButton aria-label="关闭指标">×</TextButton>
                  </SubHeader>
                  <StrengthChart />
                </SubPlot>
                <SubAxis>
                  <span>79.20</span><span>52.80</span><span>26.40</span><span>0.00</span>
                </SubAxis>

                <TimeAxis>
                  <TimeStart>09:30</TimeStart>
                  <TimeMark>10:30</TimeMark>
                  <TimeMark>13:00</TimeMark>
                  <TimeMark>14:00</TimeMark>
                  <TimeMark>15:00</TimeMark>
                  <CursorTime>11:11</CursorTime>
                </TimeAxis>
                <TimeCorner />
              </ChartGrid>

              <TabRow $h={26}>
                {STUDY_TABS.map((t) => <Tab key={t} $color={t === "指标" ? C.cyan : undefined}>{t}</Tab>)}
                <Spring />
                <EdgeTab $w={38}>+</EdgeTab>
                <EdgeTab $w={38}>−</EdgeTab>
              </TabRow>
              <TabRow $h={27}>
                <Tab>扩展<Caret>∧</Caret></Tab>
                {LINK_TABS.map(([t, c]) => <Tab key={t} $color={c}>{t}</Tab>)}
                <Spring />
                <EdgeTab $w={72} $color={C.yellow}>图文F10</EdgeTab>
                <EdgeTab $w={76} $color={C.yellow}>侧边栏《</EdgeTab>
              </TabRow>
            </Workspace>

            <Quote>
              <Title>
                <StockName>润和软件</StockName>
                <StockCode>300339</StockCode>
                <Flag>R</Flag>
              </Title>
              <Price>
                <span>23.31</span>
                <Up><Triangle />0.64</Up>
                <span>2.82%</span>
              </Price>
              <Book rows={SELLS} />
              <Book rows={BUYS} last />
              <Stats rows={STATS} height={146} />
              <Stats rows={FUNDAMENTALS} height={92} />
              <StatSection $h={120}>
                {FLOWS.map(([label, width, amount, pct, color]) => (
                  <FlowRow key={label}>
                    <span><Mixed>{label}</Mixed></span>
                    <FlowBar $color={color} style={{ width }} />
                    <Right><Mixed color={color}>{amount}</Mixed></Right>
                    <Right><Mixed color={color}>{pct}</Mixed></Right>
                  </FlowRow>
                ))}
              </StatSection>
              <Tape>
                <DataTable>
                  <colgroup><col width="83" /><col width="72" /><col width="94" /><col width="42" /><col /></colgroup>
                  <tbody>
                    {TRADES.map(([time, price, amount, side, lots], i) => (
                      <tr key={i}>
                        <th scope="row"><Mixed>{time}</Mixed></th>
                        <td><Mixed color={C.red}>{price}</Mixed></td>
                        <td><Mixed color={amount === "1270万" ? C.magenta : C.yellow}>{amount}</Mixed></td>
                        <Side $buy={side === "B"}>{side === "-" ? "" : side}</Side>
                        <Lots>{lots}</Lots>
                      </tr>
                    ))}
                  </tbody>
                </DataTable>
              </Tape>
              <PanelTabs>
                {PANEL_TABS.map((t, i) => <PanelTab key={t} $on={i === 0}>{t}</PanelTab>)}
              </PanelTabs>
            </Quote>
          </Panes>

          <Status>
            <svg width="25" height="24" viewBox="0 0 25 24" aria-hidden="true">
              <rect x="1" y="3" width="20" height="18" rx="2" fill="#f8a820" stroke="#e08800" />
              <rect x="5" y="7" width="12" height="10" fill="#f8c040" stroke="#ffffff" strokeWidth="2" />
            </svg>
            {INDICES.map(([name, last, change, pct, turnover, color]) => (
              <IndexGroup key={name} $color={color}>
                <Han $color="#000">{name}</Han>
                <Latin>{last}</Latin>
                <Latin>{change}</Latin>
                <Latin>{pct}</Latin>
                <span><Mixed color="#000">{turnover}</Mixed></span>
              </IndexGroup>
            ))}
            <StatusCell><Han>总成交</Han><span><Mixed>8480亿</Mixed></span></StatusCell>
            <StatusCell>平安证券上海上证云行情</StatusCell>
          </Status>
        </Desk>

        <SideTools>
          <ToolStack>
            {TOOL_GROUPS.map((group, g) => (
              <React.Fragment key={g}>
                {g > 0 && <SideRule />}
                {group.map((name) => (
                  <SideButton key={name} aria-label={name} $small={name === "10%"}>
                    {ICONS[name] || TEXT_ICONS[name] ? <ToolIcon name={name} /> : name}
                  </SideButton>
                ))}
              </React.Fragment>
            ))}
          </ToolStack>
        </SideTools>
      </Body>

      <Stamp>
        <StampTitle>股票公式指标网</StampTitle>
        www.gszx.com.cn
      </Stamp>
    </Page>
  );
}
